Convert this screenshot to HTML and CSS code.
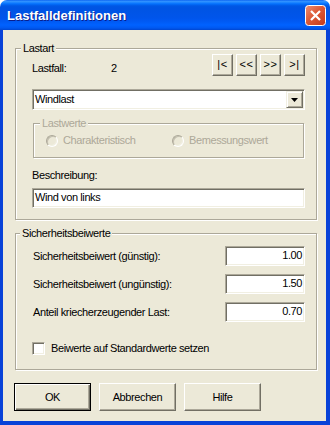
FILE: index.html
```html
<!DOCTYPE html>
<html>
<head>
<meta charset="utf-8">
<title>Lastfalldefinitionen</title>
<link rel="stylesheet" href="styles.css">
</head>
<body>
<div class="window">
  <div class="titlebar">
    <span class="title">Lastfalldefinitionen</span>
    <span class="close">
      <svg width="21" height="21" viewBox="0 0 21 21">
        <defs>
          <linearGradient id="cg" x1="0" y1="0" x2="1" y2="1">
            <stop offset="0" stop-color="#EC8F74"/>
            <stop offset="0.45" stop-color="#DD5A37"/>
            <stop offset="1" stop-color="#C2391A"/>
          </linearGradient>
        </defs>
        <rect x="0.5" y="0.5" width="20" height="20" rx="3" fill="url(#cg)" stroke="#fff"/>
        <path d="M6 6 L15 15 M15 6 L6 15" stroke="#fff" stroke-width="2.2" fill="none"/>
      </svg>
    </span>
  </div>
  <div class="frame">
    <div class="client">
      <div class="group g1">
        <span class="legend">Lastart</span>
        <div class="row-top">
          <span class="lf-label">Lastfall:</span>
          <span class="lf-value">2</span>
          <div class="nav">
            <span class="raised nav-btn">|&lt;</span>
            <span class="raised nav-btn">&lt;&lt;</span>
            <span class="raised nav-btn">&gt;&gt;</span>
            <span class="raised nav-btn">&gt;|</span>
          </div>
        </div>
        <div class="combo sunken">
          <span class="combo-text">Windlast</span>
          <span class="combo-arrow">
            <svg width="7" height="4" viewBox="0 0 7 4"><path d="M0 0 H7 L3.5 4 Z" fill="#000"/></svg>
          </span>
        </div>
        <div class="group sub">
          <span class="legend legend-sub">Lastwerte</span>
          <div class="radios">
            <span class="radio"><span class="radio-dot"></span>Charakteristisch</span>
            <span class="radio"><span class="radio-dot"></span>Bemessungswert</span>
          </div>
        </div>
        <div class="desc-label">Beschreibung:</div>
        <div class="field sunken">Wind von links</div>
      </div>

      <div class="group g2">
        <span class="legend legend-g2">Sicherheitsbeiwerte</span>
        <div class="srow first">
          <span class="slabel">Sicherheitsbeiwert (günstig):</span>
          <span class="num sunken">1.00</span>
        </div>
        <div class="srow">
          <span class="slabel">Sicherheitsbeiwert (ungünstig):</span>
          <span class="num sunken">1.50</span>
        </div>
        <div class="srow">
          <span class="slabel">Anteil kriecherzeugender Last:</span>
          <span class="num sunken">0.70</span>
        </div>
        <div class="check-row">
          <span class="checkbox"></span>
          <span>Beiwerte auf Standardwerte setzen</span>
        </div>
      </div>

      <div class="buttons">
        <span class="btn raised default">OK</span>
        <span class="btn raised">Abbrechen</span>
        <span class="btn raised">Hilfe</span>
      </div>
    </div>
  </div>
</div>
</body>
</html>
```

FILE: styles.css
```css
* {
  box-sizing: border-box;
}

html,
body {
  margin: 0;
  padding: 0;
  background: #ffffff;
}

body {
  font-family: "Liberation Sans", Arial, sans-serif;
  font-size: 11px;
  line-height: 13px;
  letter-spacing: -0.4px;
  color: #000;
}

.window {
  width: 330px;
  height: 425px;
  display: flex;
  flex-direction: column;
}

.titlebar {
  height: 30px;
  flex: none;
  display: flex;
  align-items: flex-start;
  padding: 0 4px 0 7px;
  border-radius: 7px 7px 0 0;
  background: linear-gradient(to bottom,
    #0058EE 0px, #3593FF 1px, #288EFF 2px, #127DFF 3px, #036FFC 4px,
    #0262EE 5px, #0057E5 6px, #0054E3 8px, #0055EB 18px, #005BF5 22px,
    #0062FF 25px, #0058F0 28px, #0046D0 30px);
}

.title {
  flex: 1;
  margin-top: 8px;
  font-size: 13px;
  line-height: 16px;
  font-weight: bold;
  letter-spacing: 0;
  color: #fff;
  text-shadow: 1px 1px 0 #0A1E8C;
}

.close {
  display: block;
  width: 21px;
  height: 21px;
  margin-top: 5px;
}

.close svg {
  display: block;
}

.frame {
  flex: 1;
  display: flex;
  border-style: solid;
  border-color: #0842D8;
  border-width: 0 4px 4px 3px;
}

.client {
  flex: 1;
  display: flex;
  flex-direction: column;
  background: #ECE9D8;
  padding: 18px 9px 10px 12px;
}

/* group boxes */
.group {
  display: flex;
  flex-direction: column;
  border: 1px solid #ACA899;
  box-shadow: inset 1px 1px 0 #fff, 1px 1px 0 #fff;
}

.legend {
  align-self: flex-start;
  height: 13px;
  margin: -7px 0 0 -11px;
  padding: 0 2px;
  background: #ECE9D8;
}

.g1 {
  height: 172px;
  padding: 0 11px 0 16px;
}

.row-top {
  display: flex;
  height: 22px;
  margin-top: -1px;
}

.lf-label {
  width: 79px;
  margin-top: 8px;
}

.lf-value {
  margin-top: 8px;
}

.nav {
  display: flex;
  gap: 3px;
  margin-left: auto;
}

.raised {
  background: #ECE9D8;
  border: 1px solid;
  border-color: #fff #716F64 #716F64 #fff;
  box-shadow: inset -1px -1px 0 #ACA899;
}

.nav-btn {
  width: 21px;
  height: 22px;
  display: flex;
  align-items: center;
  justify-content: center;
  padding-bottom: 1px;
  letter-spacing: 0.5px;
}

.sunken {
  background: #fff;
  border: 1px solid;
  border-color: #ACA899 #fff #fff #ACA899;
  box-shadow: inset 1px 1px 0 #716F64, inset -1px -1px 0 #F1EFE2;
}

.combo {
  display: flex;
  height: 21px;
  margin-top: 13px;
  padding: 1px;
}

.combo-text {
  flex: 1;
  line-height: 17px;
  padding-left: 1px;
}

.combo-arrow {
  width: 17px;
  height: 17px;
  display: flex;
  align-items: center;
  justify-content: center;
  background: #ECE9D8;
  border: 1px solid;
  border-color: #F1EFE2 #716F64 #716F64 #F1EFE2;
  box-shadow: inset 1px 1px 0 #fff, inset -1px -1px 0 #ACA899;
}

.combo-arrow svg {
  display: block;
}

.sub {
  height: 35px;
  margin: 13px 1px 0;
  padding-left: 12px;
}

.legend-sub {
  margin-left: -6px;
  color: #ACA899;
}

.radios {
  display: grid;
  grid-template-columns: 126px auto;
  margin-top: 4px;
}

.radio {
  display: flex;
  align-items: center;
  gap: 5px;
  height: 13px;
  color: #ACA899;
}

.radio-dot {
  width: 12px;
  height: 12px;
  border-radius: 50%;
  border: 1px solid;
  border-color: #ACA899 #fff #fff #ACA899;
  box-shadow: inset 1px 1px 0 #C3BFAF, inset -1px -1px 0 #F1EFE2;
  background: #ECE9D8;
}

.desc-label {
  margin-top: 11px;
}

.field {
  height: 20px;
  margin-top: 6px;
  padding: 0 2px;
  line-height: 17px;
}

.g2 {
  height: 137px;
  margin-top: 13px;
  padding: 0 11px 0 16px;
}

.legend-g2 {
  margin-left: -12px;
}

.srow {
  display: flex;
  align-items: center;
  height: 20px;
  margin-top: 8px;
}

.srow.first {
  margin-top: 6px;
}

.slabel {
  padding-left: 1px;
}

.num {
  width: 80px;
  height: 20px;
  margin-left: auto;
  text-align: right;
  padding-right: 2px;
  line-height: 17px;
}

.check-row {
  display: flex;
  align-items: center;
  gap: 6px;
  height: 13px;
  margin-top: 20px;
}

.checkbox {
  width: 13px;
  height: 13px;
  background: #fff;
  border: 1px solid;
  border-color: #ACA899 #fff #fff #ACA899;
  box-shadow: inset 1px 1px 0 #716F64, inset -1px -1px 0 #F1EFE2;
}

.buttons {
  display: flex;
  gap: 8px;
  margin-top: 13px;
  margin-left: -1px;
}

.btn {
  width: 77px;
  height: 28px;
  display: flex;
  align-items: center;
  justify-content: center;
}

.btn.default {
  border-color: #000;
  box-shadow: inset 1px 1px 0 #fff, inset -1px -1px 0 #716F64, inset -2px -2px 0 #ACA899;
}
```
